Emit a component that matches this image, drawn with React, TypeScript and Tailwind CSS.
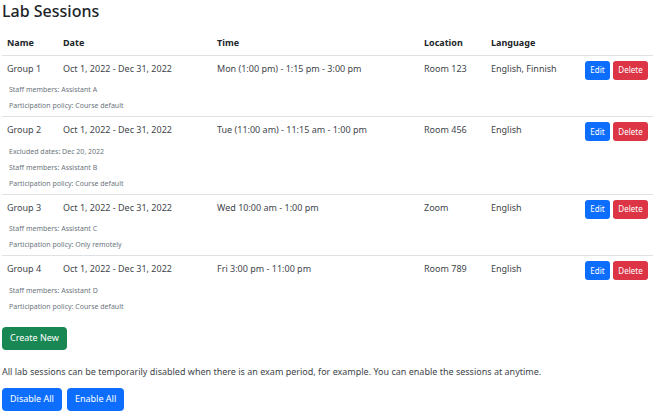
import React from "react";

type Session = {
  name: string;
  date: string;
  time: string;
  location: string;
  language: string;
  details: string[];
};

const sessions: Session[] = [
  {
    name: "Group 1",
    date: "Oct 1, 2022 - Dec 31, 2022",
    time: "Mon (1:00 pm) - 1:15 pm - 3:00 pm",
    location: "Room 123",
    language: "English, Finnish",
    details: ["Staff members: Assistant A", "Participation policy: Course default"],
  },
  {
    name: "Group 2",
    date: "Oct 1, 2022 - Dec 31, 2022",
    time: "Tue (11:00 am) - 11:15 am - 1:00 pm",
    location: "Room 456",
    language: "English",
    details: [
      "Excluded dates: Dec 20, 2022",
      "Staff members: Assistant B",
      "Participation policy: Course default",
    ],
  },
  {
    name: "Group 3",
    date: "Oct 1, 2022 - Dec 31, 2022",
    time: "Wed 10:00 am - 1:00 pm",
    location: "Zoom",
    language: "English",
    details: ["Staff members: Assistant C", "Participation policy: Only remotely"],
  },
  {
    name: "Group 4",
    date: "Oct 1, 2022 - Dec 31, 2022",
    time: "Fri 3:00 pm - 11:00 pm",
    location: "Room 789",
    language: "English",
    details: ["Staff members: Assistant D", "Participation policy: Course default"],
  },
];

const cell = "h-[27px] px-[5px] pt-[5px] align-top";
const head = "h-6 px-[5px] pt-[1px] align-middle font-bold";
const small = "h-[19px] rounded-[3px] text-[8px] leading-4 text-white";
const large = "h-[23px] rounded-[4px] px-2 text-[9px] leading-4 text-white";

function SessionRows({ session }: { session: Session }) {
  return (
    <tbody className="border-t border-[#dee2e6]">
      <tr>
        <td className={cell}>{session.name}</td>
        <td className={cell}>{session.date}</td>
        <td className={cell}>{session.time}</td>
        <td className={cell}>{session.location}</td>
        <td className={cell}>{session.language}</td>
        <td className={cell}>
          <div className="flex justify-end gap-[3px]">
            <button type="button" className={`${small} w-[25px] bg-[#0d6efd]`}>Edit</button>
            <button type="button" className={`${small} w-[35px] bg-[#dc3545]`}>Delete</button>
          </div>
        </td>
      </tr>
      <tr>
        <td colSpan={6} className="px-[7px] pb-[2px] text-[7px] leading-4 text-[#6c757d]">
          {session.details.map((line) => (
            <p key={line}>{line}</p>
          ))}
        </td>
      </tr>
    </tbody>
  );
}

export default function App() {
  return (
    <main className="bg-white px-[2px] font-['Noto_Sans','Open_Sans',sans-serif] text-[9px] leading-4 text-[#41464b]">
      <h1 className="pb-[9px] text-[16px] leading-[22px] font-medium text-[#212529]">Lab Sessions</h1>
      <table className="w-full table-fixed border-collapse text-left whitespace-nowrap">
        <colgroup>
          <col className="w-[56px]" />
          <col className="w-[154px]" />
          <col />
          <col className="w-[67px]" />
          <col className="w-[90px]" />
          <col className="w-[77px]" />
        </colgroup>
        <thead className="text-[#212529]">
          <tr>
            <th scope="col" className={head}>Name</th>
            <th scope="col" className={head}>Date</th>
            <th scope="col" className={head}>Time</th>
            <th scope="col" className={head}>Location</th>
            <th scope="col" className={head}>Language</th>
            <td />
          </tr>
        </thead>
        {sessions.map((session) => (
          <SessionRows key={session.name} session={session} />
        ))}
      </table>
      <div className="pt-[10px]">
        <button type="button" className={`${large} block bg-[#198754]`}>Create New</button>
      </div>
      <p className="pt-[14px] pb-2">
        All lab sessions can be temporarily disabled when there is an exam period, for example. You can enable the sessions at anytime.
      </p>
      <div className="flex gap-[5px]">
        <button type="button" className={`${large} bg-[#0d6efd]`}>Disable All</button>
        <button type="button" className={`${large} bg-[#0d6efd]`}>Enable All</button>
      </div>
    </main>
  );
}
